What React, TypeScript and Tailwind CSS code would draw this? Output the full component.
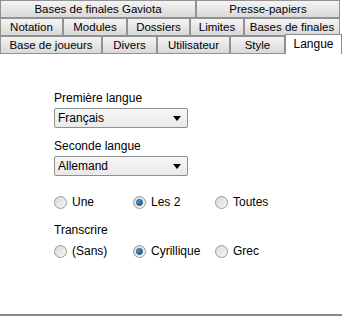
import React from 'react';

const font = { fontFamily: '"Liberation Sans", Arial, sans-serif' };

const Tab = ({ label, w, active }: { label: string; w: number; active?: boolean }) => (
  <div
    style={{ width: w }}
    className={
      active
        ? 'h-[20px] -mt-[2px] flex items-center justify-center bg-white border border-b-0 border-[#898c95] text-[12px] leading-[15px] text-black pb-[1px] z-10'
        : 'h-[18px] flex items-center justify-center bg-gradient-to-b from-[#f4f4f4] to-[#d9d9d9] border border-[#929292] text-[11.5px] leading-[15px] text-black'
    }
  >
    {label}
  </div>
);

const Select = ({ value }: { value: string }) => (
  <div className="w-[134px] h-[20px] flex items-center justify-between rounded-[2px] border border-[#8e8f8f] bg-gradient-to-b from-[#f7f7f7] to-[#e9e9e9] pl-[3px] pr-[6px] text-[12px] text-black">
    <span>{value}</span>
    <svg width="8" height="5" viewBox="0 0 8 5">
      <path d="M0 0h8L4 5z" fill="#000" />
    </svg>
  </div>
);

const Radio = ({ label, checked, w }: { label: string; checked?: boolean; w: number }) => (
  <div style={{ width: w }} className="flex items-center gap-[5px] h-[15px] text-[12px] text-black">
    <span className="w-[13px] h-[13px] rounded-full border border-[#9a9a9a] bg-gradient-to-br from-[#d8d8d8] to-[#f8f8f8] flex items-center justify-center">
      {checked && (
        <span className="w-[7px] h-[7px] rounded-full bg-gradient-to-br from-[#5ab0e6] to-[#0d4f8a] border border-[#1c4a70]" />
      )}
    </span>
    <span>{label}</span>
  </div>
);

export default function App() {
  return (
    <div style={font} className="w-[342px] h-[316px] bg-white relative overflow-hidden">
      {/* tab rows */}
      <div className="flex flex-col">
        <div className="flex">
          <Tab label="Bases de finales Gaviota" w={196} />
          <Tab label="Presse-papiers" w={144} />
        </div>
        <div className="flex">
          <Tab label="Notation" w={63} />
          <Tab label="Modules" w={64} />
          <Tab label="Dossiers" w={63} />
          <Tab label="Limites" w={54} />
          <Tab label="Bases de finales" w={96} />
        </div>
        <div className="flex items-end">
          <Tab label="Base de joueurs" w={102} />
          <Tab label="Divers" w={55} />
          <Tab label="Utilisateur" w={73} />
          <Tab label="Style" w={55} />
          <Tab label="Langue" w={57} active />
        </div>
      </div>

      {/* panel */}
      <div className="h-[262px] border-b-2 border-[#8a8a8a] pl-[54px] pt-[37px] text-[12px] leading-[15px] text-black">
        <div>Première langue</div>
        <div className="mt-[2px]">
          <Select value="Français" />
        </div>
        <div className="mt-[11px]">Seconde langue</div>
        <div className="mt-[2px]">
          <Select value="Allemand" />
        </div>
        <div className="mt-[19px] flex">
          <Radio label="Une" w={79} />
          <Radio label="Les 2" w={82} checked />
          <Radio label="Toutes" w={80} />
        </div>
        <div className="mt-[13px]">Transcrire</div>
        <div className="mt-[6px] flex">
          <Radio label="(Sans)" w={79} />
          <Radio label="Cyrillique" w={82} checked />
          <Radio label="Grec" w={80} />
        </div>
      </div>
    </div>
  );
}
